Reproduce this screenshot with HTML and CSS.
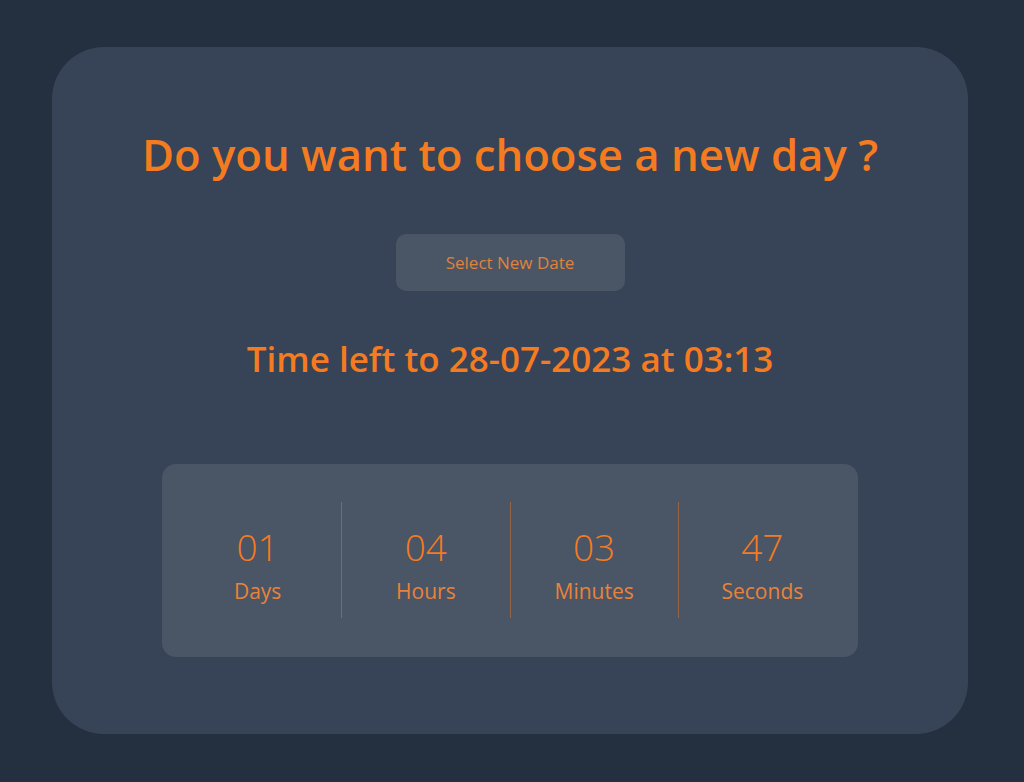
FILE: index.html
```html
<!DOCTYPE html>
<html lang="en">
<head>
<meta charset="utf-8">
<title>Countdown</title>
<link rel="stylesheet" href="styles.css">
</head>
<body>
<main class="card">
  <h1 class="title">Do you want to choose a new day ?</h1>
  <button class="select-btn" type="button">Select New Date</button>
  <h2 class="subtitle">Time left to 28-07-2023 at 03:13</h2>
  <section class="countdown">
    <div class="unit"><span class="num">01</span><span class="label">Days</span></div>
    <div class="unit"><span class="num">04</span><span class="label">Hours</span></div>
    <div class="unit"><span class="num">03</span><span class="label">Minutes</span></div>
    <div class="unit"><span class="num">47</span><span class="label">Seconds</span></div>
  </section>
</main>
</body>
</html>
```
FILE: styles.css
```css
html, body {
  margin: 0;
  padding: 0;
}
body {
  background: #243040;
  font-family: "Open Sans", "Noto Sans", sans-serif;
  color: #f47b20;
  height: 782px;
  overflow: hidden;
}
.card {
  box-sizing: border-box;
  margin: 47px 0 0 52px;
  width: 916px;
  height: 687px;
  background: #374357;
  border-radius: 52px;
  display: flex;
  flex-direction: column;
  align-items: center;
  padding-top: 86px;
}
.title {
  margin: 0;
  font-size: 43.7px;
  font-weight: 600;
  line-height: 1;
  color: #f47b20;
  white-space: nowrap;
}
.select-btn {
  margin-top: 57px;
  width: 229px;
  height: 57px;
  border: none;
  border-radius: 10px;
  background: #4a5566;
  color: #e0823a;
  font-family: inherit;
  font-size: 17px;
  font-weight: 400;
}
.subtitle {
  margin: 50px 0 0;
  font-size: 35px;
  font-weight: 600;
  line-height: 1;
  color: #f47b20;
  white-space: nowrap;
}
.countdown {
  margin-top: 88px;
  box-sizing: border-box;
  width: 696px;
  height: 193px;
  background: #4a5566;
  border-radius: 14px;
  display: flex;
  align-items: center;
  padding: 0 12px;
}
.unit {
  flex: 1;
  box-sizing: border-box;
  height: 116px;
  padding-top: 26px;
  display: flex;
  flex-direction: column;
  align-items: center;
  border-right: 1px solid rgba(244, 123, 32, 0.45);
}
.unit:last-child {
  border-right: none;
}
.num {
  font-size: 37px;
  font-weight: 300;
  line-height: 1;
  color: #f47b20;
}
.label {
  margin-top: 16px;
  font-size: 21px;
  font-weight: 400;
  line-height: 1;
  color: #e9823a;
}
```
